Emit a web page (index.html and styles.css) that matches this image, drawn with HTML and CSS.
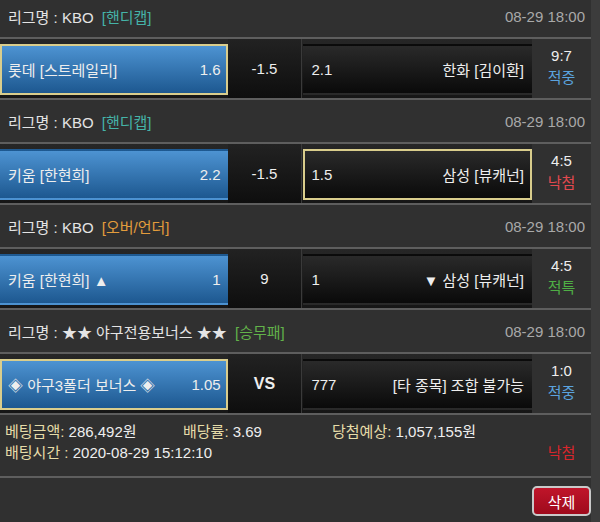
FILE: index.html
```html
<!DOCTYPE html>
<html lang="ko">
<head>
  <meta charset="UTF-8" />
  <meta name="viewport" content="width=device-width, initial-scale=1" />
  <title>베팅내역</title>
  <link rel="stylesheet" href="styles.css">
</head>
<body>

<div class="page">

  <div class="league">
    <span>리그명 : KBO <em class="tag handi">[핸디캡]</em></span>
    <span class="date">08-29 18:00</span>
  </div>
  <div class="match">
    <div class="odds">
      <div class="pick home picked"><span>롯데 [스트레일리]</span><span>1.6</span></div>
      <div class="line">-1.5</div>
      <div class="pick away"><span>2.1</span><span>한화 [김이환]</span></div>
    </div>
    <div class="result"><span>9:7</span><span class="hit">적중</span></div>
  </div>

  <div class="league">
    <span>리그명 : KBO <em class="tag handi">[핸디캡]</em></span>
    <span class="date">08-29 18:00</span>
  </div>
  <div class="match">
    <div class="odds">
      <div class="pick home"><span>키움 [한현희]</span><span>2.2</span></div>
      <div class="line">-1.5</div>
      <div class="pick away picked"><span>1.5</span><span>삼성 [뷰캐넌]</span></div>
    </div>
    <div class="result"><span>4:5</span><span class="miss">낙첨</span></div>
  </div>

  <div class="league">
    <span>리그명 : KBO <em class="tag ou">[오버/언더]</em></span>
    <span class="date">08-29 18:00</span>
  </div>
  <div class="match">
    <div class="odds">
      <div class="pick home"><span>키움 [한현희] ▲</span><span>1</span></div>
      <div class="line">9</div>
      <div class="pick away"><span>1</span><span>▼ 삼성 [뷰캐넌]</span></div>
    </div>
    <div class="result"><span>4:5</span><span class="void">적특</span></div>
  </div>

  <div class="league">
    <span>리그명 : ★★ 야구전용보너스 ★★ <em class="tag wdl">[승무패]</em></span>
    <span class="date">08-29 18:00</span>
  </div>
  <div class="match">
    <div class="odds">
      <div class="pick home picked"><span>◈ 야구3폴더 보너스 ◈</span><span>1.05</span></div>
      <div class="line vs">VS</div>
      <div class="pick away"><span>777</span><span>[타 종목] 조합 불가능</span></div>
    </div>
    <div class="result"><span>1:0</span><span class="hit">적중</span></div>
  </div>

  <div class="summary">
    <div><b>베팅금액:</b> 286,492원</div>
    <div><b>배당률:</b> 3.69</div>
    <div><b>당첨예상:</b> 1,057,155원</div>
    <div></div>
    <div class="time"><b>배팅시간 :</b> 2020-08-29 15:12:10</div>
    <div class="state">낙첨</div>
  </div>

  <div class="actions">
    <button type="button" class="btn-del">삭제</button>
  </div>

</div>

</body>
</html>
```

FILE: styles.css
```css
body {
  margin: 0;
  min-height: 100vh;
  background-color: #3c3c3c;
  font-family: "Liberation Sans", "Noto Sans CJK KR", sans-serif;
  font-size: 15px;
  color: #eee;
}
.page {
  width: 591px;
  min-height: calc(100vh + 5px);
  margin-top: -5px;
  background-color: #303030;
}

/* league header */
.league {
  height: 42px;
  display: flex;
  align-items: center;
  justify-content: space-between;
  padding: 0 6px 0 8px;
  border-bottom: 2px solid #5e5e5e;
  color: #e4e4e4;
}
.tag { font-style: normal; margin-left: 4px; }
.tag.handi { color: #45b3a8; }
.tag.ou { color: #e39c3c; }
.tag.wdl { color: #62b24a; }
.date { color: #a9a9a9; }

/* match row */
.match {
  height: 59px;
  display: flex;
  border-bottom: 2px solid #5e5e5e;
}
.odds {
  width: 532px;
  display: flex;
  padding: 5px 0 3px;
  box-sizing: border-box;
  background: linear-gradient(#262626, #161616);
}
.pick {
  display: flex;
  align-items: center;
  justify-content: space-between;
  padding: 0 6px;
  box-sizing: border-box;
  border: 2px solid transparent;
}
.pick.home {
  width: 228px;
  padding-right: 5px;
  background: linear-gradient(#4d93d2, #1d5890);
}
.pick.away {
  width: 229px;
  margin-left: 1px;
  background: linear-gradient(#2a2a2a, #0a0a0a);
}
.pick.picked { border-color: #d9cd8c; }
.line {
  width: 74px;
  display: flex;
  align-items: center;
  justify-content: center;
  border-right: 1px solid #3a3a3a;
  margin: -5px 0 -3px;
  background: linear-gradient(#222, #0e0e0e);
}
.line.vs { font-weight: bold; font-size: 16px; }
.result {
  flex: 1;
  display: flex;
  flex-direction: column;
  align-items: center;
  justify-content: center;
  line-height: 22px;
  padding-bottom: 3px;
}
.hit { color: #5ba3de; }
.miss { color: #e2494f; }
.void { color: #4fae45; }

/* summary */
.summary {
  display: grid;
  grid-template-columns: 178px 149px 1fr 59px;
  line-height: 21px;
  padding: 6px 0 13px 5px;
  border-bottom: 2px solid #5e5e5e;
}
.summary b { font-weight: normal; color: #e6dca8; }
.summary .time { grid-column: 1 / 4; }
.summary .state { text-align: center; color: #d8262c; }

.actions {
  display: flex;
  justify-content: flex-end;
  padding: 8px 0;
}
.btn-del {
  width: 59px;
  height: 30px;
  background: linear-gradient(#c0152a, #9e0a1c);
  color: #fff;
  border: 2px solid #c9c9c9;
  border-radius: 5px;
  font-family: inherit;
  font-size: 15px;
  cursor: pointer;
}
.btn-del:hover { background: #a00c1e; }
```
